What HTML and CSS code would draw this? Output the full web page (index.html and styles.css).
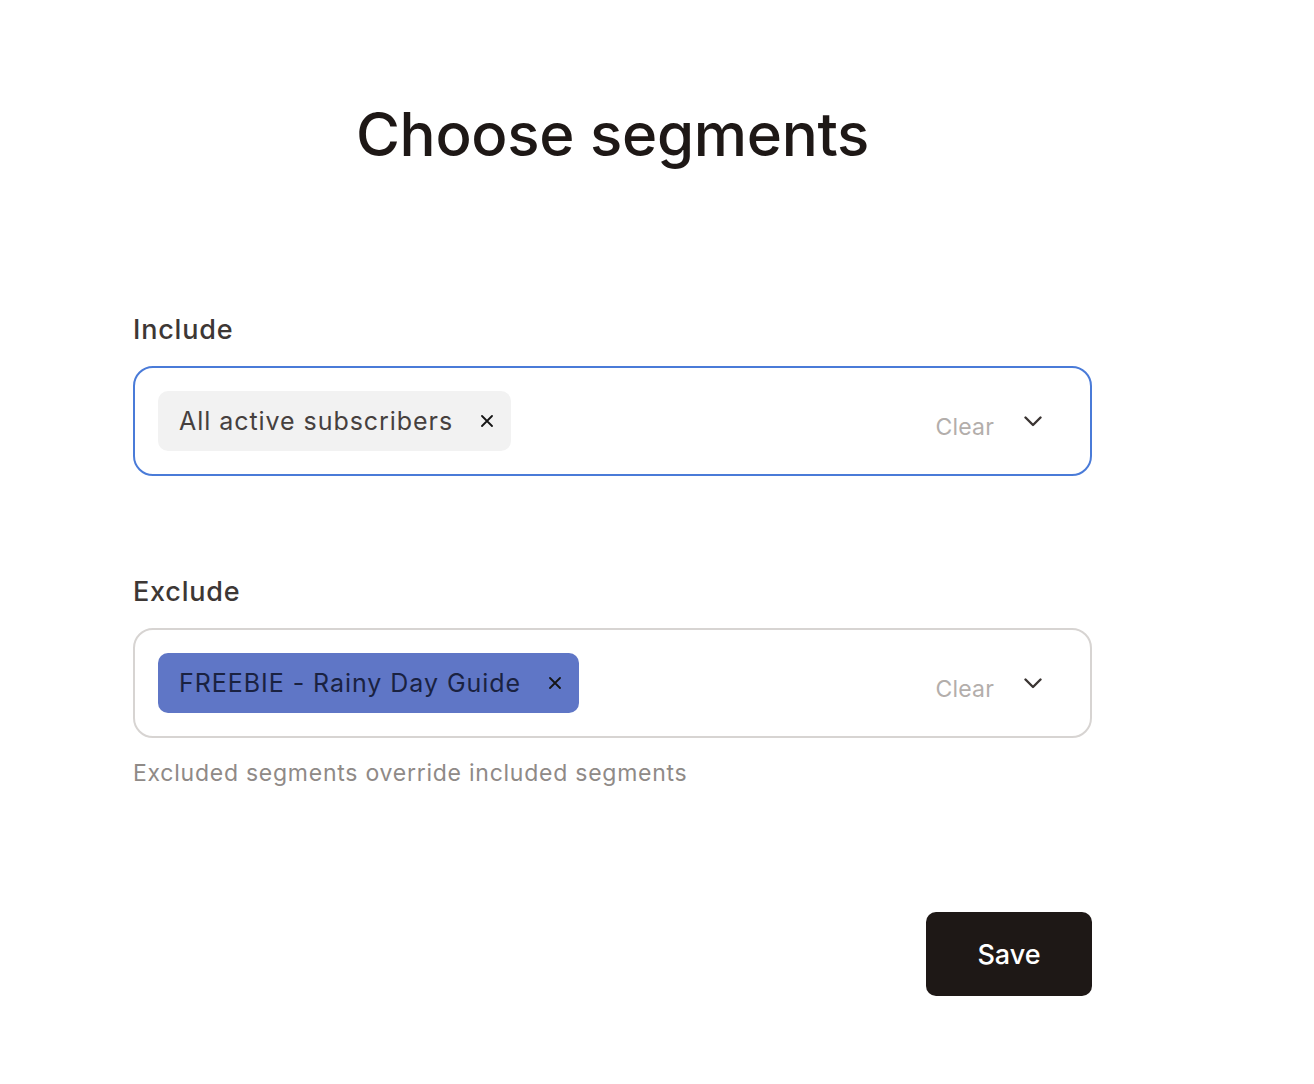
FILE: index.html
```html
<!DOCTYPE html>
<html>
<head>
<meta charset="utf-8">
<link rel="stylesheet" href="styles.css">
</head>
<body>
<div class="page">
  <h1 class="title">Choose segments</h1>
  <div class="field field-include">
    <div class="label">Include</div>
    <div class="select select-focus">
      <div class="chips">
        <span class="chip chip-grey">All active subscribers <svg class="x" width="12" height="12" viewBox="0 0 12 12"><path d="M1 1 L11 11 M11 1 L1 11" stroke="#151515" stroke-width="1.8" stroke-linecap="round"/></svg></span>
      </div>
      <span class="clear">Clear</span>
      <svg class="chev" width="18" height="11" viewBox="0 0 18 11"><path d="M1.5 1.5 L9 9 L16.5 1.5" fill="none" stroke="#3b3533" stroke-width="2.4" stroke-linecap="round" stroke-linejoin="round"/></svg>
    </div>
  </div>
  <div class="field field-exclude">
    <div class="label">Exclude</div>
    <div class="select">
      <div class="chips">
        <span class="chip chip-blue">FREEBIE - Rainy Day Guide <svg class="x" width="12" height="12" viewBox="0 0 12 12"><path d="M1 1 L11 11 M11 1 L1 11" stroke="#151515" stroke-width="1.8" stroke-linecap="round"/></svg></span>
      </div>
      <span class="clear">Clear</span>
      <svg class="chev" width="18" height="11" viewBox="0 0 18 11"><path d="M1.5 1.5 L9 9 L16.5 1.5" fill="none" stroke="#3b3533" stroke-width="2.4" stroke-linecap="round" stroke-linejoin="round"/></svg>
    </div>
    <div class="help">Excluded segments override included segments</div>
  </div>
  <div class="actions">
    <button class="save">Save</button>
  </div>
</div>
</body>
</html>
```
FILE: styles.css
```css
html, body {
  margin: 0;
  padding: 0;
  background: #ffffff;
}
body {
  font-family: Inter, "Noto Sans", sans-serif;
  color: #1e1816;
}
.page {
  width: 959px;
  margin-left: 133px;
  padding-top: 94px;
}
.title {
  margin: 0;
  text-align: center;
  font-size: 60px;
  font-weight: 500;
  line-height: 80px;
  letter-spacing: -0.3px;
  color: #1e1816;
}
.field-include {
  margin-top: 140px;
}
.field-exclude {
  margin-top: 100px;
}
.label {
  font-size: 27px;
  font-weight: 500;
  line-height: 32px;
  letter-spacing: 0.8px;
  color: #3d3735;
  margin-bottom: 20px;
}
.select {
  box-sizing: border-box;
  height: 110px;
  border: 2px solid #d7d4d2;
  border-radius: 20px;
  display: flex;
  align-items: center;
  padding: 0 48px 0 23px;
}
.select-focus {
  border-color: #4a7bd8;
}
.chips {
  flex: 1;
  display: flex;
}
.chip {
  display: inline-flex;
  align-items: center;
  height: 60px;
  padding: 0 18px 0 21px;
  border-radius: 10px;
  font-size: 25px;
  line-height: 30px;
  letter-spacing: 0.95px;
}
.chip-grey {
  background: #f2f2f2;
  color: #46403e;
}
.chip-blue {
  background: #5f76c6;
  color: #1a2241;
}
.x {
  display: block;
  margin-left: 28px;
}
.clear {
  font-size: 23px;
  letter-spacing: 0.2px;
  color: #b3aeab;
  margin-top: 12px;
  margin-right: 30px;
}
.chev {
  display: block;
}
.help {
  margin-top: 20px;
  font-size: 23px;
  line-height: 30px;
  letter-spacing: 0.75px;
  color: #8f8a87;
}
.actions {
  display: flex;
  justify-content: flex-end;
  margin-top: 124px;
}
.save {
  width: 166px;
  height: 84px;
  border: none;
  border-radius: 10px;
  background: #1e1816;
  color: #ffffff;
  font-family: Inter, "Noto Sans", sans-serif;
  font-size: 27px;
  font-weight: 500;
}
```
